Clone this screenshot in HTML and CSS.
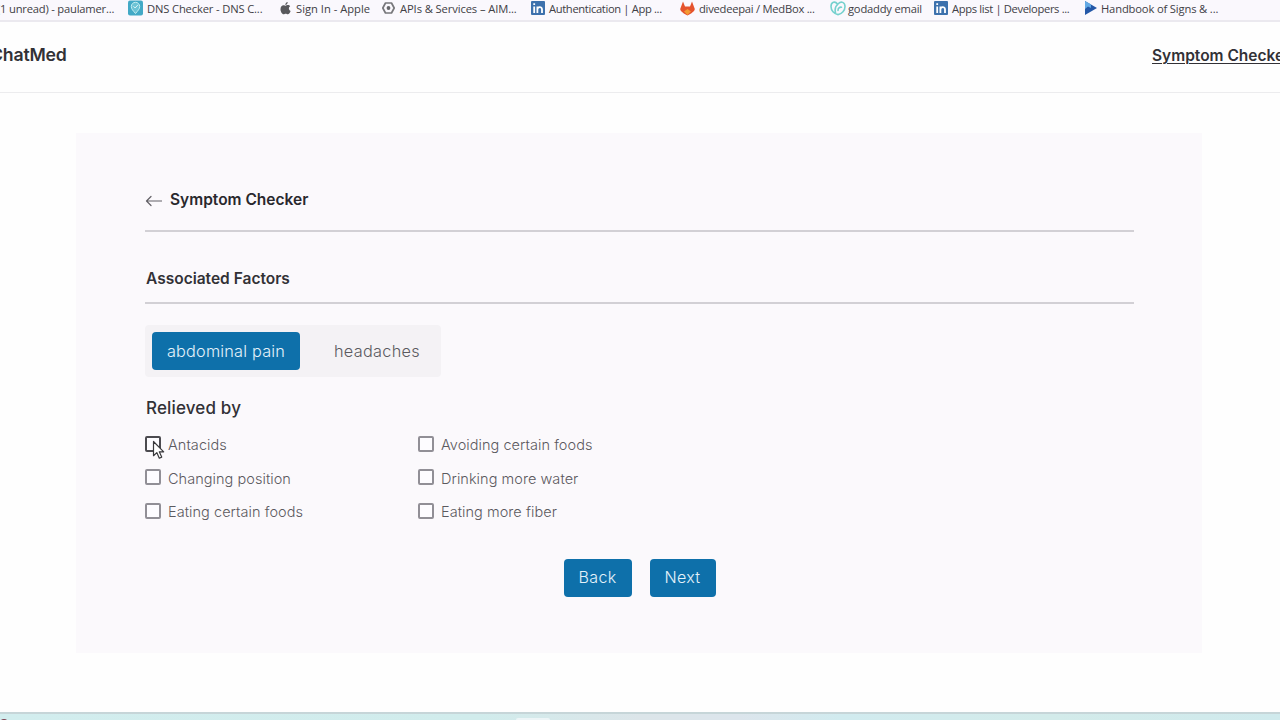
FILE: index.html
```html
<!DOCTYPE html>
<html lang="en">
<head>
  <meta charset="UTF-8" />
  <meta name="viewport" content="width=device-width, initial-scale=1.0" />
  <title>ChatMed</title>
  <link rel="stylesheet" href="styles.css">
</head>
<body>
  <div class="bookmarks">
    <a class="bookmark first"><span>(1 unread) - paulamer...</span></a>
    <a class="bookmark">
      <svg width="15" height="16" viewBox="0 0 15 16"><rect y="0.5" width="15" height="15" rx="2" fill="#42a9c6"/><path d="M7.500 13.500C5 10.500 3.300 9 3.300 6.500a4.200 4.200 0 0 1 8.400 0C11.700 9 10 10.500 7.500 13.500z" fill="#6cc3d5" stroke="#c3edf1" stroke-width="1"/><path d="M5.500 6.300l1.600 1.700L10 4.800" fill="none" stroke="#d9f5f7"/></svg>
      <span>DNS Checker - DNS C...</span>
    </a>
    <a class="bookmark apple">
      <svg width="11" height="13" viewBox="0 0 11 13"><path d="M7.700 0C7.800 1.500 6.700 2.900 5.300 2.900 5.200 1.500 6.400.2 7.700 0zM5.500 3.800C6.100 3.800 6.800 3.100 7.900 3.100 8.900 3.100 9.700 3.600 10.200 4.300 8.300 5.500 8.600 8.100 10.600 8.900 10.100 10.400 9 12.300 7.800 12.300 7 12.300 6.600 11.800 5.700 11.800S4.400 12.300 3.600 12.300C2.100 12.300.5 9.500.5 7.200.5 4.700 2 3.200 3.600 3.200 4.500 3.200 5 3.800 5.500 3.800z" fill="#58585c"/></svg>
      <span>Sign In - Apple</span>
    </a>
    <a class="bookmark apis">
      <svg width="13" height="12" viewBox="0 0 13 12"><path d="M3.500 1h6l2.700 5-2.700 5h-6L.8 6z" fill="none" stroke="#77777b" stroke-width="1.700" stroke-linejoin="round"/><circle cx="6.500" cy="6" r="1.900" fill="#66666a"/></svg>
      <span>APIs &amp; Services – AIM...</span>
    </a>
    <a class="bookmark auth">
      <svg width="14" height="14" viewBox="0 0 14 14"><rect width="14" height="14" rx="1" fill="#3d71ad"/><path d="M3.200 5.500V12M3.200 2.200v1.900M6.400 12V5.500M6.400 8.500c0-3 4.600-3.300 4.600 0V12" fill="none" stroke="#fff" stroke-width="1.800"/></svg>
      <span>Authentication | App ...</span>
    </a>
    <a class="bookmark gitlab">
      <svg width="15" height="15" viewBox="0 0 15 15"><path d="M3 .5L5 5.500h5L12 .5l2.800 7.500c0 2.300-3.500 4.400-7.300 6.500C3.700 12.400.2 10.300.2 8z" fill="#e5532d"/><path d="M4 10.500L7.500 8l3.500 2.500-3.500 3.500z" fill="#f39a32"/></svg>
      <span>divedeepai / MedBox ...</span>
    </a>
    <a class="bookmark godaddy">
      <svg width="16" height="15" viewBox="0 0 16 15"><path d="M7.500 3C5-.3 1 1 1 5.500 1 9.500 4 13 8 13.600 12 13 15 9.500 15 5.500 15 1 11 0 8.500 2.500 5.500 5 4.500 8 5.500 11.500M8 9.500C8 7 9.500 6 11.500 6.200" fill="none" stroke="#76d1ce" stroke-width="1.600" stroke-linecap="round"/></svg>
      <span>godaddy email</span>
    </a>
    <a class="bookmark apps">
      <svg width="14" height="14" viewBox="0 0 14 14"><rect width="14" height="14" rx="1" fill="#3d71ad"/><path d="M3.200 5.500V12M3.200 2.200v1.900M6.400 12V5.500M6.400 8.500c0-3 4.600-3.300 4.600 0V12" fill="none" stroke="#fff" stroke-width="1.800"/></svg>
      <span>Apps list | Developers ...</span>
    </a>
    <a class="bookmark">
      <svg width="12" height="14" viewBox="0 0 12 14"><path d="M0 0L12 7 0 14z" fill="#2458a8"/><path d="M0 0L6 3.500V7L3 5.500 0 8z" fill="#63aae5"/></svg>
      <span>Handbook of Signs &amp; ...</span>
    </a>
  </div>

  <header>
    <div class="logo">ChatMed</div>
    <a class="nav-link">Symptom Checker</a>
  </header>

  <main>
    <div class="title-row">
      <svg width="17" height="12" viewBox="0 0 17 12"><path d="M16.500 6h-15M6 1.500L1.500 6 6 10.500" fill="none" stroke="#626166" stroke-width="1.200" stroke-linecap="round" stroke-linejoin="round"/></svg>
      <h1>Symptom Checker</h1>
    </div>
    <h2>Associated Factors</h2>

    <div class="tabs">
      <button class="tab active">abdominal pain</button>
      <button class="tab">headaches</button>
    </div>

    <h3>Relieved by</h3>
    <div class="options">
      <label class="option hovered"><input type="checkbox"><span>Antacids</span>
        <svg class="cursor" width="13" height="20" viewBox="0 0 13 20"><path d="M1.500 1.500v14.200l3.300-3.100 2.500 5.600 2.400-1.100-2.400-5.300h4.400z" fill="#fff" stroke="#39393c" stroke-width="1.200" stroke-linejoin="round"/></svg>
      </label>
      <label class="option"><input type="checkbox"><span>Avoiding certain foods</span></label>
      <label class="option"><input type="checkbox"><span>Changing position</span></label>
      <label class="option"><input type="checkbox"><span>Drinking more water</span></label>
      <label class="option"><input type="checkbox"><span>Eating certain foods</span></label>
      <label class="option"><input type="checkbox"><span>Eating more fiber</span></label>
    </div>

    <div class="actions">
      <button class="btn back">Back</button>
      <button class="btn next">Next</button>
    </div>
  </main>

  <footer><i class="dot"></i><i class="task"></i></footer>
</body>
</html>
```
FILE: styles.css
```css
* { box-sizing: border-box; }
body { margin: 0; height: 720px; overflow: hidden; display: flex; flex-direction: column; background: #fefefe; color: #323136; font-family: Inter, sans-serif; }
h1, h2, h3 { margin: 0; }
svg { flex: none; display: block; }
button { border: 0; padding: 0; font-family: inherit; white-space: nowrap; }

/* browser bookmarks */
.bookmarks { height: 22px; flex: none; display: grid; grid-template-columns: 128px 152px 102px 149px 149px 150px 104px 151px 195px; background: #faf8fd; border-bottom: 2px solid #ebe9ef; font: 11.2px "Open Sans", sans-serif; color: #414045; overflow: hidden; }
.bookmark { display: flex; align-items: center; gap: 4px; height: 16px; white-space: nowrap; letter-spacing: -0.15px; }
.first { margin-left: -3px; letter-spacing: -0.2px; }
.apple { gap: 5px; letter-spacing: 0; }
.apis { gap: 5px; letter-spacing: -0.1px; }
.auth, .apps { letter-spacing: -0.35px; }
.gitlab { letter-spacing: -0.25px; }
.godaddy { gap: 2px; letter-spacing: -0.2px; }

header { height: 71px; flex: none; display: flex; justify-content: space-between; align-items: flex-start; padding-top: 22px; border-bottom: 1px solid #ececee; white-space: nowrap; overflow: hidden; }
.logo { font-size: 17.700px; line-height: 22px; font-weight: 600; margin-left: -10px; letter-spacing: -0.2px; }
.nav-link { font-size: 15.500px; line-height: 23px; font-weight: 600; text-decoration: underline; text-underline-offset: 2px; text-decoration-thickness: 1px; width: 128px; }

main { width: 1126px; height: 520px; flex: none; margin: 40px 0 0 76px; padding: 48px 68px 0 69px; background: #fbf9fc; display: flex; flex-direction: column; }
.title-row { height: 51px; flex: none; display: flex; align-items: flex-start; gap: 8px; border-bottom: 2px solid #d2d0d5; }
.title-row svg { margin-top: 14px; }
h1 { font-size: 15.500px; line-height: 37px; font-weight: 600; color: #29282d; }
h2 { height: 72px; flex: none; padding: 36px 0 0 1px; font-size: 15.500px; line-height: 22px; font-weight: 600; border-bottom: 2px solid #d2d0d5; }

.tabs { display: flex; align-self: flex-start; width: 296px; height: 52px; margin-top: 21px; padding: 7px 6px 7px 7px; background: #f4f2f5; border-radius: 4px; }
.tab { height: 38px; flex: 1; background: none; color: #5b5a5f; padding: 0 0 1px 19px; font-size: 16.300px; font-weight: 300; letter-spacing: 0.3px; }
.tab.active { flex: 0 0 148px; padding-left: 0; background: #0e70aa; color: #e4f2fa; border-radius: 4px; letter-spacing: 0.2px; }

h3 { margin-top: 19px; padding-left: 1px; font-size: 17px; line-height: 24px; font-weight: 500; letter-spacing: 0.15px; }
.options { display: grid; grid-template-columns: 273px 273px; grid-auto-rows: 33.500px; margin-top: 8px; }
.option { position: relative; display: flex; align-items: center; gap: 7px; font-size: 14.500px; font-weight: 300; color: #5b5a5f; white-space: nowrap; letter-spacing: 0.05px; }
.option input { appearance: none; width: 16px; height: 16px; margin: 0 0 2px; border: 2px solid #918f96; border-radius: 2px; background: #fdfcff; }
.option.hovered input { border-color: #4c4b50; }
.cursor { position: absolute; left: 7px; top: 12px; }

.actions { display: flex; justify-content: center; gap: 18px; margin-top: 30px; }
.btn { height: 38px; padding-bottom: 1px; background: #0e70aa; color: #e4f2fa; border-radius: 4px; font-size: 16px; font-weight: 300; letter-spacing: 0.3px; }
.back { width: 68px; }
.next { width: 66px; }

/* top edge of the taskbar */
footer { margin-top: auto; height: 8px; flex: none; display: flex; border-top: 2px solid #c6d5d8; background: linear-gradient(90deg, #d2edee 0, #d1ecec 480px, #dce5e9 640px, #dce5ec 740px, #d1ebef 840px, #d3ebea 1050px, #d0eaed 1280px); }
.dot { width: 8px; height: 6px; margin: 5px 508px 0 0; background: #7d4353; border-radius: 4px 4px 0 0; }
.task { width: 34px; height: 3px; margin-top: 4px; background: #edf5f7; border-radius: 2px 2px 0 0; }
```
